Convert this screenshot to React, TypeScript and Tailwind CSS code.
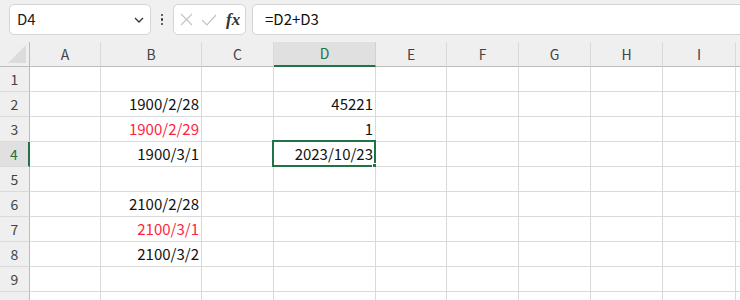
import React from 'react';

const COLS = [
	{ id: 'A', w: 71 },
	{ id: 'B', w: 101 },
	{ id: 'C', w: 72 },
	{ id: 'D', w: 102 },
	{ id: 'E', w: 71 },
	{ id: 'F', w: 72 },
	{ id: 'G', w: 72 },
	{ id: 'H', w: 72 },
	{ id: 'I', w: 73 },
	{ id: 'J', w: 72 },
];

type Cell = { v: string; red?: boolean };

const DATA: Record<number, Record<string, Cell>> = {
	2: { B: { v: '1900/2/28' }, D: { v: '45221' } },
	3: { B: { v: '1900/2/29', red: true }, D: { v: '1' } },
	4: { B: { v: '1900/3/1' }, D: { v: '2023/10/23' } },
	6: { B: { v: '2100/2/28' } },
	7: { B: { v: '2100/3/1', red: true } },
	8: { B: { v: '2100/3/2' } },
};

const ROWS = [1, 2, 3, 4, 5, 6, 7, 8, 9, 10];

const font = "font-['Noto_Sans_CJK_JP','Noto_Sans',sans-serif]";

const Toolbar = () => (
	<div className="flex h-[42px] items-start gap-[6px] bg-[#f0f0f0] pl-[9px] pt-[4px]">
		<div className="flex h-[31px] w-[142px] items-center justify-between rounded-[5px] border border-[#d4d4d4] bg-white pl-[7px] pr-[6px]">
			<span className="text-[15px] text-[#222]">D4</span>
			<svg width="10" height="6" viewBox="0 0 10 6" fill="none">
				<path d="M1 1l4 4 4-4" stroke="#333" strokeWidth="1.3" />
			</svg>
		</div>
		<div className="flex h-[31px] w-[10px] flex-col items-center justify-center gap-[2px]">
			<span className="h-[2.5px] w-[2.5px] rounded-full bg-[#333]" />
			<span className="h-[2.5px] w-[2.5px] rounded-full bg-[#333]" />
			<span className="h-[2.5px] w-[2.5px] rounded-full bg-[#333]" />
		</div>
		<div className="flex h-[31px] w-[73px] items-center gap-[8px] rounded-[5px] border border-[#d4d4d4] bg-white pl-[6px]">
			<svg width="13" height="13" viewBox="0 0 13 13" fill="none">
				<path d="M1 1l11 11M12 1L1 12" stroke="#c4c4c4" strokeWidth="1.2" />
			</svg>
			<svg width="16" height="12" viewBox="0 0 16 12" fill="none">
				<path d="M1 6l5 5L15 1" stroke="#c4c4c4" strokeWidth="1.2" />
			</svg>
			<span className="ml-[1px] font-['Liberation_Serif',serif] text-[17px] italic font-bold leading-none text-[#333]">
				fx
			</span>
		</div>
		<div className="flex h-[31px] flex-1 items-center rounded-l-[5px] border border-r-0 border-[#d4d4d4] bg-white pl-[12px]">
			<span className="text-[15px] text-[#111]">=D2+D3</span>
		</div>
	</div>
);

const Header = () => (
	<div className="flex h-[25px] bg-[#efefef]">
		<div className="flex h-[25px] w-[30px] shrink-0 items-end justify-end border-r border-b border-[#bcbcbc] pb-[3px] pr-[3px]">
			<svg width="18" height="18" viewBox="0 0 18 18">
				<path d="M18 0L18 18L0 18Z" fill="#dcdcdc" />
			</svg>
		</div>
		{COLS.map((c) => {
			const sel = c.id === 'D';
			return (
				<div
					key={c.id}
					style={{ width: c.w }}
					className={
						sel
							? 'flex h-[25px] shrink-0 items-center justify-center border-r border-b-2 border-r-[#d0d0d0] border-b-[#217346] bg-[#e0e0e0] text-[14px] text-[#217346]'
							: 'flex h-[25px] shrink-0 items-center justify-center border-r border-b border-r-[#dadada] border-b-[#bcbcbc] text-[14px] text-[#444]'
					}
				>
					{c.id === 'J' ? '' : c.id}
				</div>
			);
		})}
	</div>
);

const Row = ({ n }: { n: number }) => {
	const sel = n === 4;
	return (
		<div className="flex h-[25px]">
			<div
				className={
					sel
						? 'flex h-[25px] w-[30px] shrink-0 items-center justify-center border-r-2 border-b border-r-[#217346] border-b-[#dadada] bg-[#e0e0e0] text-[14px] text-[#217346]'
						: 'flex h-[25px] w-[30px] shrink-0 items-center justify-center border-r border-b border-r-[#bcbcbc] border-b-[#dadada] bg-[#efefef] text-[14px] text-[#444]'
				}
			>
				{n}
			</div>
			{COLS.map((c) => {
				const cell = DATA[n]?.[c.id];
				const active = sel && c.id === 'D';
				return (
					<div
						key={c.id}
						style={{ width: c.w }}
						className="relative flex h-[25px] shrink-0 items-center justify-end border-r border-b border-[#dadada] bg-white pr-[2px]"
					>
						{cell && (
							<span
								className={
									cell.red ? 'text-[15px] text-[#ff1f3d]' : 'text-[15px] text-[#111]'
								}
							>
								{cell.v}
							</span>
						)}
						{active && (
							<>
								<div className="pointer-events-none absolute -left-[2px] -top-[2px] h-[27px] w-[104px] border-2 border-[#217346]" />
								<div className="absolute -bottom-[4px] -right-[4px] h-[7px] w-[7px] border border-white bg-[#217346]" />
							</>
						)}
					</div>
				);
			})}
		</div>
	);
};

export default function App() {
	return (
		<div className={`h-[300px] w-[740px] overflow-hidden bg-white ${font}`}>
			<Toolbar />
			<Header />
			{ROWS.map((n) => (
				<Row key={n} n={n} />
			))}
		</div>
	);
}
